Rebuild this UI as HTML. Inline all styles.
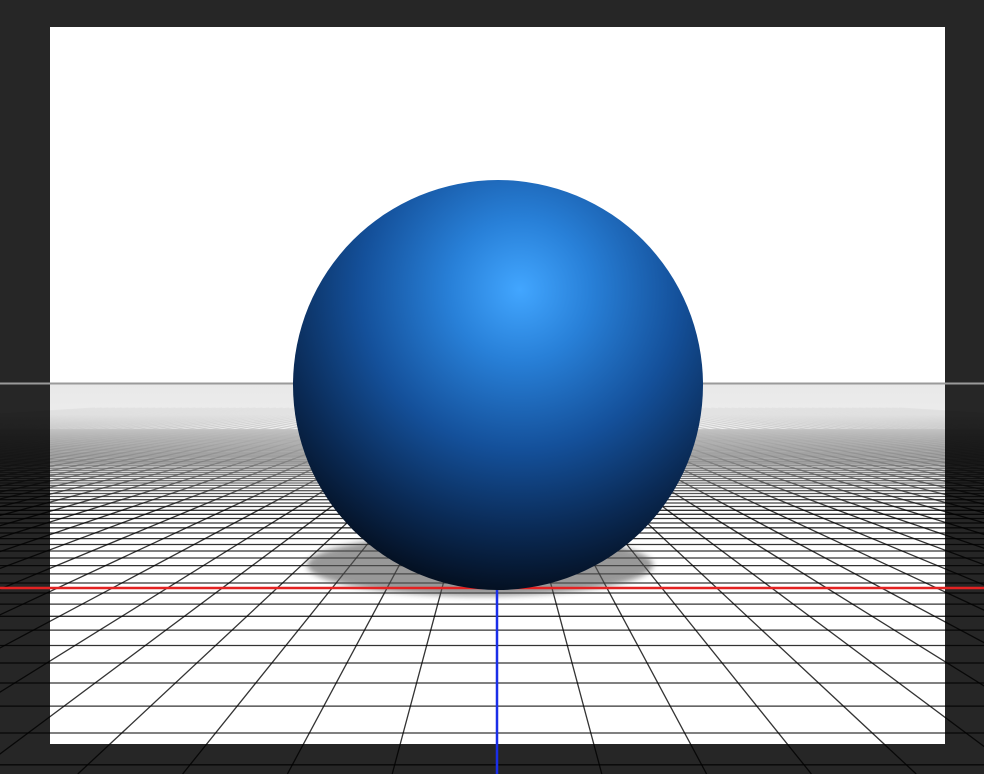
<!DOCTYPE html>
<html><head><meta charset="utf-8"><style>
html,body{margin:0;padding:0;background:#262626;width:984px;height:774px;overflow:hidden}
svg{display:block}
</style></head><body>
<svg id="s" width="984" height="774" viewBox="0 0 984 774" xmlns="http://www.w3.org/2000/svg">
<defs>
<linearGradient id="fw" x1="0" y1="383" x2="0" y2="510" gradientUnits="userSpaceOnUse">
<stop offset="0" stop-color="#e8e8e8" stop-opacity="1"/><stop offset="0.25" stop-color="#ebebeb" stop-opacity="0.95"/><stop offset="0.55" stop-color="#f2f2f2" stop-opacity="0.6"/><stop offset="1" stop-color="#ffffff" stop-opacity="0"/>
</linearGradient>
<linearGradient id="fd" x1="0" y1="383" x2="0" y2="510" gradientUnits="userSpaceOnUse">
<stop offset="0" stop-color="#262626" stop-opacity="1"/><stop offset="0.25" stop-color="#262626" stop-opacity="0.95"/><stop offset="0.55" stop-color="#262626" stop-opacity="0.6"/><stop offset="1" stop-color="#262626" stop-opacity="0"/>
</linearGradient>
<radialGradient id="sph" cx="520" cy="290" r="320" gradientUnits="userSpaceOnUse">
<stop offset="0" stop-color="#42a6ff"/>
<stop offset="0.22" stop-color="#2880d8"/>
<stop offset="0.5" stop-color="#14509a"/>
<stop offset="0.75" stop-color="#0a2a55"/>
<stop offset="1" stop-color="#020812"/>
</radialGradient>
<filter id="bl" x="-20%" y="-50%" width="140%" height="200%"><feGaussianBlur stdDeviation="3"/></filter>
</defs>
<rect x="50" y="27" width="895" height="717" fill="#fff"/>
<g id="grid" stroke="#000" stroke-width="1.3" fill="none"></g>
<rect x="0" y="383" width="50" height="130" fill="url(#fd)"/>
<rect x="945" y="383" width="39" height="130" fill="url(#fd)"/>
<rect x="50" y="383" width="895" height="130" fill="url(#fw)"/>
<line x1="0" y1="383.5" x2="984" y2="383.5" stroke="#9a9a9a" stroke-width="2"/>
<ellipse cx="480" cy="565" rx="173" ry="31" fill="#555" opacity="0.6" filter="url(#bl)"/>
<line x1="0" y1="588" x2="984" y2="588" stroke="#e32222" stroke-width="2.5"/>
<line x1="497" y1="588" x2="497" y2="774" stroke="#1a2ee8" stroke-width="2.5"/>
<circle cx="498" cy="385" r="205" fill="url(#sph)"/>
</svg>
<script>
var g=document.getElementById('grid'),h='';
var y0=383,K=4200;
for(var n=10;n<=90;n++){var d=K/n;var y=y0+d;if(y>774)continue;
h+='<line x1="0" x2="984" y1="'+y.toFixed(1)+'" y2="'+y.toFixed(1)+'" stroke-opacity="0.8"/>';}
var c=0.268;
for(var k=-60;k<=60;k++){var yb=774,db=yb-y0;var xb=497+k*c*db;
var ys=y0+25,xs=497+k*c*25;
h+='<line x1="'+xs.toFixed(1)+'" y1="'+ys+'" x2="'+xb.toFixed(1)+'" y2="'+yb+'" stroke-opacity="0.8"/>';}
g.innerHTML=h;
</script>
</body></html>
